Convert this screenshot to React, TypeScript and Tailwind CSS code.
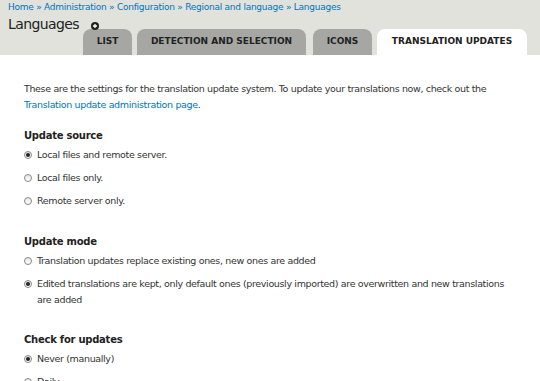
import * as React from 'react';

const font = { fontFamily: '"DejaVu Sans", Verdana, sans-serif' };

function Radio({ checked, label }: { checked?: boolean; label: string }) {
  return (
    <label className="flex items-start gap-[5px] text-[9.5px] tracking-[-0.35px] leading-[16px] text-[#333]">
      <span className="mt-[4px] shrink-0 w-[8px] h-[8px] rounded-full border border-[#888] bg-gradient-to-b from-[#e8e8e8] to-white flex items-center justify-center">
        {checked && <span className="w-[4px] h-[4px] rounded-full bg-[#222]" />}
      </span>
      <span>{label}</span>
    </label>
  );
}

const tabs = [
  { label: 'List', cls: 'w-[49px] bg-[#a6a7a2]' },
  { label: 'Detection and selection', cls: 'w-[169px] ml-[5px] bg-[#a6a7a2]' },
  { label: 'Icons', cls: 'w-[59px] ml-[7px] bg-[#a6a7a2]' },
  { label: 'Translation updates', cls: 'w-[150px] ml-[5px] bg-white' },
];

export default function App() {
  return (
    <div className="w-[540px] h-[381px] overflow-hidden bg-white" style={font}>
      <div className="bg-[#e1e2dc] h-[55px] flex flex-col">
        <div className="px-[8px] pt-[1px] text-[9px] tracking-[-0.25px] leading-[12px] text-[#0074bd]">
          Home » Administration » Configuration » Regional and language » Languages
        </div>
        <div className="flex items-end flex-1">
          <div className="pl-[8px] self-start pt-[1px] flex items-center gap-[12px] w-[83px] shrink-0 relative z-10">
            <h1 className="text-[14px] tracking-[-0.6px] leading-[20px] text-[#222] whitespace-nowrap">Languages</h1>
            <span className="mt-[3px] shrink-0 w-[8px] h-[8px] rounded-full bg-[#222] flex items-center justify-center">
              <svg width="6" height="6" viewBox="0 0 6 6">
                <path d="M3 1v4M1 3h4" stroke="white" strokeWidth="1.3" />
              </svg>
            </span>
          </div>
          <ul className="flex items-end">
            {tabs.map((t) => (
              <li
                key={t.label}
                className={`h-[26px] flex items-center justify-center rounded-t-[8px] uppercase font-bold text-[9px] text-[#222] whitespace-nowrap ${t.cls}`}
              >
                {t.label}
              </li>
            ))}
          </ul>
        </div>
      </div>
      <div className="px-[24px] pt-[26px] text-[#333]">
        <p className="text-[9.5px] tracking-[-0.35px] leading-[16px]">
          These are the settings for the translation update system. To update your translations now, check out the{' '}
          <a className="text-[#0074bd]">Translation update administration page</a>.
        </p>
        <h2 className="mt-[15px] text-[10px] tracking-[-0.25px] leading-[16px] font-bold text-[#222]">Update source</h2>
        <div className="mt-[3px] flex flex-col gap-[7px]">
          <Radio checked label="Local files and remote server." />
          <Radio label="Local files only." />
          <Radio label="Remote server only." />
        </div>
        <h2 className="mt-[25px] text-[10px] tracking-[-0.25px] leading-[16px] font-bold text-[#222]">Update mode</h2>
        <div className="mt-[3px] flex flex-col gap-[7px]">
          <Radio label="Translation updates replace existing ones, new ones are added" />
          <Radio checked label="Edited translations are kept, only default ones (previously imported) are overwritten and new translations are added" />
        </div>
        <h2 className="mt-[24px] text-[10px] tracking-[-0.25px] leading-[16px] font-bold text-[#222]">Check for updates</h2>
        <div className="mt-[3px] flex flex-col gap-[7px]">
          <Radio checked label="Never (manually)" />
          <Radio label="Daily" />
        </div>
      </div>
    </div>
  );
}
